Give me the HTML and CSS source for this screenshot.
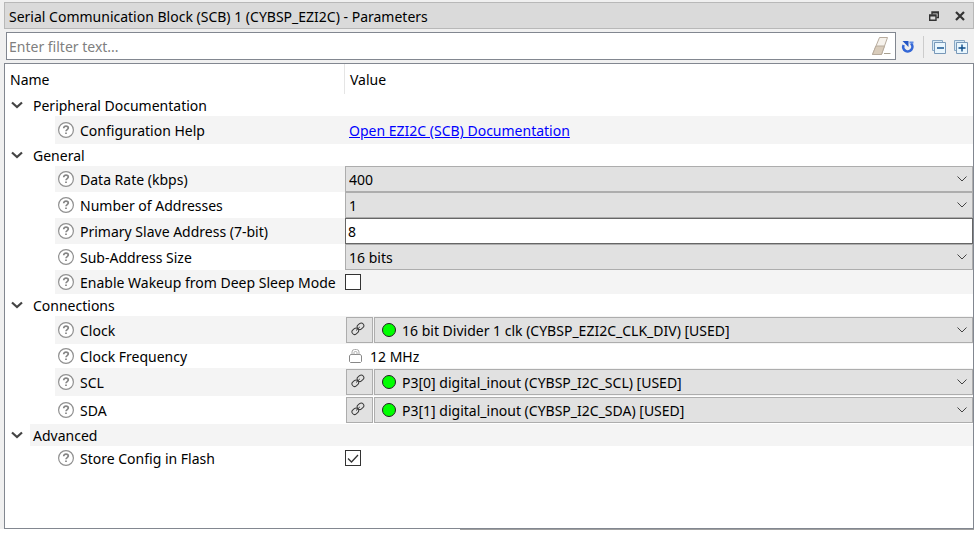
FILE: index.html
```html
<!DOCTYPE html>
<html lang="en">
<head>
<meta charset="utf-8">
<title>Parameters</title>
<link rel="stylesheet" href="styles.css">
</head>
<body>
<svg class="defs" aria-hidden="true">
  <symbol id="help" viewBox="0 0 16 16">
    <circle cx="8" cy="8" r="7.4" fill="#fff" stroke="#909090" stroke-width="1.2"/>
    <path d="M5.700 6.300C5.700 4.800 6.700 4.200 8 4.200s2.300.7 2.300 1.900C10.300 7.500 8 7.700 8 9.300M8 10.500v1.600" fill="none" stroke="#858585" stroke-width="1.700"/>
  </symbol>
  <symbol id="link" viewBox="0 0 14 14">
    <g fill="none" stroke="#3a3a3a" stroke-width="1">
      <rect x="-3.500" y="-2.600" width="7" height="5.200" rx="2.600" transform="translate(9.500 4.300) rotate(-40)"/>
      <rect x="-3.500" y="-2.600" width="7" height="5.200" rx="2.600" transform="translate(4.300 9.300) rotate(-40)"/>
      <path d="M5 8.500l3.800-3.500"/>
    </g>
  </symbol>
  <symbol id="chevron" viewBox="0 0 12 8">
    <path d="M1 1.500L6 6l5-4.500" fill="none" stroke="#444" stroke-width="2.200"/>
  </symbol>
</svg>
<main class="dock">
  <header class="titlebar">
    <h1>Serial Communication Block (SCB) 1 (CYBSP_EZI2C) - Parameters</h1>
    <button class="tool" aria-label="Float"><svg width="10" height="10" viewBox="0 0 10 10"><path d="M3 3.500V1h6.300v5.500H7.500M3 1.800h6.300" fill="none" stroke="#333" stroke-width="1.400"/><path d="M.7 4h6.300v5.300H.7zM.7 4.800H7" fill="none" stroke="#333" stroke-width="1.400"/></svg></button>
    <button class="tool" aria-label="Close"><svg width="10" height="10" viewBox="0 0 10 10"><path d="M1 1l8 8M9 1L1 9" stroke="#333" stroke-width="2.200"/></svg></button>
  </header>
  <div class="toolbar">
    <div class="filter">
      <input type="text" aria-label="Filter" placeholder="Enter filter text...">
      <button class="tool" aria-label="Clear filter"><svg width="20" height="20" viewBox="0 0 20 20"><path d="M8.500 1.500h8L10.500 18.500H1.500z" fill="#f6f2ec" stroke="#b8ac9e"/><path d="M4.900 10H13.500L10.500 18.500H1.500z" fill="#d9ccbb" stroke="#b8ac9e"/><path d="M13 17.500h6.500" stroke="#a8a090"/></svg></button>
    </div>
    <div class="actions">
      <button class="tool" aria-label="Reset"><svg width="14" height="14" viewBox="0 0 14 14"><path d="M2.600 5A4.600 4.600 0 1 0 10 3.500" fill="none" stroke="#3467d6" stroke-width="2.600"/><path d="M1.500 1h6v6z" fill="#2456c4"/><path d="M8.500 2.500h4" stroke="#5d8ae4" stroke-width="2"/></svg></button>
      <span class="divider"></span>
      <button class="tool" aria-label="Collapse all"><svg width="14" height="14" viewBox="0 0 14 14"><path d="M.5 .5h10v10H.5z" fill="#d7e9f5" stroke="#88a8c4"/><path d="M2.500 2.500h11v11h-11z" fill="#e9f6fd" stroke="#7898b8"/><path d="M5 8h7" stroke="#0a4a88" stroke-width="1.400"/></svg></button>
      <button class="tool" aria-label="Expand all"><svg width="14" height="14" viewBox="0 0 14 14"><path d="M.5 .5h10v10H.5z" fill="#d7e9f5" stroke="#88a8c4"/><path d="M2.500 2.500h11v11h-11z" fill="#e9f6fd" stroke="#7898b8"/><path d="M4.500 8h7M8 4.500v7" stroke="#0a4a88" stroke-width="1.400"/></svg></button>
    </div>
  </div>
  <div class="panel">
    <table>
      <colgroup><col class="c-name"><col></colgroup>
      <thead><tr><th><span>Name</span></th><th><span>Value</span></th></tr></thead>
      <tbody>
        <tr class="group"><th colspan="2"><div class="head"><button class="tool" aria-label="Collapse"><svg><use href="#chevron"/></svg></button><span>Peripheral Documentation</span></div></th></tr>
        <tr class="tall shade"><th><div class="name"><svg><use href="#help"/></svg><span>Configuration Help</span></div></th><td><div class="val"><a href="#docs">Open EZI2C (SCB) Documentation</a></div></td></tr>
        <tr class="group"><th colspan="2"><div class="head"><button class="tool" aria-label="Collapse"><svg><use href="#chevron"/></svg></button><span>General</span></div></th></tr>
        <tr class="shade"><th><div class="name"><svg><use href="#help"/></svg><label for="rate">Data Rate (kbps)</label></div></th><td><div class="val"><select id="rate"><option>400</option></select></div></td></tr>
        <tr><th><div class="name"><svg><use href="#help"/></svg><label for="count">Number of Addresses</label></div></th><td><div class="val"><select id="count"><option>1</option></select></div></td></tr>
        <tr class="shade"><th><div class="name"><svg><use href="#help"/></svg><label for="addr">Primary Slave Address (7-bit)</label></div></th><td><div class="val"><input type="text" id="addr" value="8"></div></td></tr>
        <tr><th><div class="name"><svg><use href="#help"/></svg><label for="size">Sub-Address Size</label></div></th><td><div class="val"><select id="size"><option>16 bits</option></select></div></td></tr>
        <tr class="short shade"><th><div class="name"><svg><use href="#help"/></svg><label for="wake">Enable Wakeup from Deep Sleep Mode</label></div></th><td><div class="val"><input type="checkbox" id="wake"></div></td></tr>
        <tr class="group"><th colspan="2"><div class="head"><button class="tool" aria-label="Collapse"><svg><use href="#chevron"/></svg></button><span>Connections</span></div></th></tr>
        <tr class="tall shade"><th><div class="name"><svg><use href="#help"/></svg><label for="clock">Clock</label></div></th><td><div class="val linked"><button class="jump" aria-label="Go to clock"><svg><use href="#link"/></svg></button><div class="pick"><i class="dot"></i><select id="clock"><option>16 bit Divider 1 clk (CYBSP_EZI2C_CLK_DIV) [USED]</option></select></div></div></td></tr>
        <tr class="short"><th><div class="name"><svg><use href="#help"/></svg><span>Clock Frequency</span></div></th><td><div class="val locked"><svg viewBox="0 0 13 14"><path d="M1.500 5.500h10l1 1.500v5.500l-1 1h-10l-1-1V7z" fill="#fff" stroke="#888"/><path d="M3 5.500V3Q3 .5 5.500 .5h2Q10 .5 10 3v2.500M5 5.500V3.500Q5 2.500 6.500 2.500T8 3.500v2" fill="none" stroke="#aaa"/></svg><span>12 MHz</span></div></td></tr>
        <tr class="tall shade"><th><div class="name"><svg><use href="#help"/></svg><label for="scl">SCL</label></div></th><td><div class="val linked"><button class="jump" aria-label="Go to SCL pin"><svg><use href="#link"/></svg></button><div class="pick"><i class="dot"></i><select id="scl"><option>P3[0] digital_inout (CYBSP_I2C_SCL) [USED]</option></select></div></div></td></tr>
        <tr class="tall"><th><div class="name"><svg><use href="#help"/></svg><label for="sda">SDA</label></div></th><td><div class="val linked"><button class="jump" aria-label="Go to SDA pin"><svg><use href="#link"/></svg></button><div class="pick"><i class="dot"></i><select id="sda"><option>P3[1] digital_inout (CYBSP_I2C_SDA) [USED]</option></select></div></div></td></tr>
        <tr class="group shade"><th colspan="2"><div class="head"><button class="tool" aria-label="Collapse"><svg><use href="#chevron"/></svg></button><span>Advanced</span></div></th></tr>
        <tr class="short"><th><div class="name"><svg><use href="#help"/></svg><label for="flash">Store Config in Flash</label></div></th><td><div class="val"><input type="checkbox" id="flash" checked></div></td></tr>
      </tbody>
    </table>
  </div>
</main>
</body>
</html>
```
FILE: styles.css
```css
* { box-sizing: border-box; }
body {
  margin: 0;
  background: #fff;
  color: #000;
  font: 14px/20px "Noto Sans", "Open Sans", sans-serif;
}
button, input, select { font: inherit; color: inherit; margin: 0; }
svg { display: block; flex: none; }
.defs { position: absolute; width: 0; height: 0; }
.dock {
  display: flex;
  flex-direction: column;
  min-height: 100vh;
  margin-right: 4px;
  padding: 2px 0 4px 4px;
  background: linear-gradient(#fff, #fff) bottom / 100% 4px no-repeat #f0f0f0;
}
.titlebar {
  display: flex;
  align-items: center;
  gap: 16px;
  height: 27px;
  padding: 0 8px 0 4px;
  background: #dadada;
  border: 1px solid #b8b8b8;
}
h1 { flex: 1; margin: 0; padding-top: 2px; font-size: 14px; font-weight: 400; }
.tool { display: flex; padding: 0; border: 0; background: none; }
.toolbar { display: flex; align-items: center; height: 34px; padding: 0 6px 0 2px; gap: 5px; }
.filter {
  flex: 1;
  display: flex;
  align-items: center;
  height: 28px;
  padding: 0 4px 0 2px;
  background: #fff;
  border: 1px solid #828790;
}
.filter input { flex: 1; padding: 2px 0 0; border: 0; background: none; outline: 0; }
.filter input::placeholder { color: #808080; opacity: 1; }
.actions { display: flex; align-items: center; gap: 8px; padding-top: 2px; }
.divider { width: 1px; height: 22px; background: #ccc; }
.panel { flex: 1; background: #fff; border: 1px solid #828790; }
/* edge of the scroll area under the value column */
.dock::after {
  content: "";
  height: 1px;
  margin: 0 0 -1px 456px;
  background: #a0a0a0;
}
table { width: 100%; table-layout: fixed; border-collapse: separate; border-spacing: 0; }
.c-name { width: 340px; }
th, td { padding: 0; font-weight: 400; text-align: left; white-space: nowrap; }
thead th { height: 30px; padding: 2px 5px 0; }
thead th:first-child { border-right: 1px solid #e5e5e5; }
.head { display: flex; align-items: center; gap: 7px; height: 22px; padding-left: 6px; }
.head svg { width: 12px; height: 8px; }
.head span { flex: 1; padding-left: 3px; padding-top: 2px; }
.name, .val { display: flex; align-items: center; height: 26px; }
.tall .name, .tall .val { height: 28px; }
.short .name, .short .val { height: 24px; }
.name { gap: 6px; margin-left: 50px; padding-left: 3px; }
.name svg { width: 16px; height: 16px; }
.name label, .name span, .val span { padding-top: 2px; }
.val a { padding: 2px 0 0 4px; color: #00f; }
.shade .name, .shade .val, .shade .head span { background: #f4f4f4; }
select, #addr { flex: 1; min-width: 0; height: 26px; padding: 2px 3px 0; border-radius: 0; outline: 0; }
#addr { padding: 0 2px; background: #fff; border: 1px solid #666; }
select {
  appearance: none;
  border: 1px solid #adadad;
  background: #e1e1e1 url("data:image/svg+xml,%3Csvg xmlns='http://www.w3.org/2000/svg' width='10' height='6'%3E%3Cpath d='M.5.5L5 5 9.500.5' fill='none' stroke='%23444'/%3E%3C/svg%3E") right 5px center no-repeat;
}
input[type="checkbox"] {
  appearance: none;
  width: 16px;
  height: 16px;
  border: 1px solid #333;
  background: #fff;
}
input[type="checkbox"]:checked {
  background: #fff url("data:image/svg+xml,%3Csvg xmlns='http://www.w3.org/2000/svg' width='14' height='14'%3E%3Cpath d='M2 7.500L5.500 11 12 4' fill='none' stroke='%23333' stroke-width='1.300'/%3E%3C/svg%3E") center no-repeat;
}
.linked { gap: 1px; padding-left: 1px; }
.jump {
  display: flex;
  align-items: center;
  justify-content: center;
  width: 27px;
  height: 26px;
  padding: 0 3px 2px 0;
  background: #e1e1e1;
  border: 1px solid #adadad;
}
.jump svg { width: 14px; height: 14px; }
.pick { position: relative; flex: 1; display: flex; }
.pick select { padding-left: 27px; }
.dot {
  position: absolute;
  top: 6px;
  left: 8px;
  width: 14px;
  height: 14px;
  border: 1px solid #222;
  border-radius: 50%;
  background: #0f0;
}
.locked { gap: 8px; padding-left: 4px; }
.locked svg { width: 13px; height: 14px; }
```
